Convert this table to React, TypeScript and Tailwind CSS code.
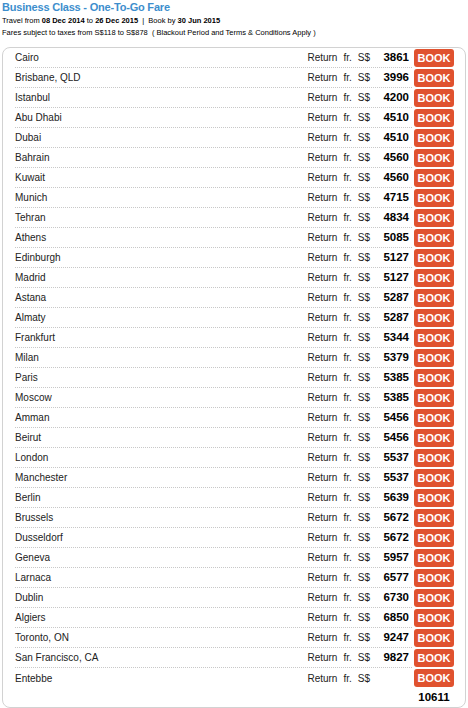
const fares: [string, string][] = [
  ['Cairo', '3861'],
  ['Brisbane, QLD', '3996'],
  ['Istanbul', '4200'],
  ['Abu Dhabi', '4510'],
  ['Dubai', '4510'],
  ['Bahrain', '4560'],
  ['Kuwait', '4560'],
  ['Munich', '4715'],
  ['Tehran', '4834'],
  ['Athens', '5085'],
  ['Edinburgh', '5127'],
  ['Madrid', '5127'],
  ['Astana', '5287'],
  ['Almaty', '5287'],
  ['Frankfurt', '5344'],
  ['Milan', '5379'],
  ['Paris', '5385'],
  ['Moscow', '5385'],
  ['Amman', '5456'],
  ['Beirut', '5456'],
  ['London', '5537'],
  ['Manchester', '5537'],
  ['Berlin', '5639'],
  ['Brussels', '5672'],
  ['Dusseldorf', '5672'],
  ['Geneva', '5957'],
  ['Larnaca', '6577'],
  ['Dublin', '6730'],
  ['Algiers', '6850'],
  ['Toronto, ON', '9247'],
  ['San Francisco, CA', '9827'],
  ['Entebbe', ''],
];

const FareRow = ({ city, price, last }: { city: string; price: string; last: boolean }) => (
  <div className="flex h-[20px] items-center">
    <div
      className={`flex h-full flex-1 items-center ${last ? '' : 'border-b border-dotted border-[#c8c8c8]'}`}
    >
      <span className="flex-1 text-[10px] text-[#222]">{city}</span>
      <span className="mr-[2px] flex gap-[6px] text-[10px] text-[#222]">
        <span>Return</span>
        <span>fr.</span>
        <span>S$</span>
      </span>
      <span className="w-[40px] pr-[3px] text-right text-[11.5px] font-bold text-black">{price}</span>
    </div>
    <button
      type="button"
      className="ml-[2px] flex h-[18px] w-[40px] items-center justify-center rounded-[3px] bg-[#e0522f] text-[11px] font-bold text-white"
    >
      BOOK
    </button>
  </div>
);

const App = () => {
  return (
    <div className="h-[708px] w-[468px] bg-white font-['Liberation_Sans',Arial,sans-serif]">
      <div className="px-[2px]">
        <h1 className="text-[11px] font-bold leading-[15px] tracking-[-0.2px] text-[#3d8ecd]">
          Business Class - One-To-Go Fare
        </h1>
        <p className="text-[7.5px] leading-[12px] text-black">
          Travel from <b>08 Dec 2014</b> to <b>26 Dec 2015</b> &nbsp;|&nbsp; Book by <b>30 Jun 2015</b>
        </p>
        <p className="text-[7.5px] leading-[12px] text-black">
          Fares subject to taxes from S$118 to S$878 &nbsp;( Blackout Period and Terms &amp; Conditions Apply )
        </p>
      </div>

      <div className="mx-[2px] mt-[8px] w-[464px] rounded-[8px] border border-[#d2d2d2] pr-[11px] pl-[12px]">
        {fares.map(([city, price], i) => (
          <FareRow
            key={city}
            city={city}
            price={price}
            last={i === fares.length - 1}
          />
        ))}
        <div className="flex h-[19px] items-center justify-end">
          <span className="w-[40px] text-center text-[11.5px] font-bold text-black">10611</span>
        </div>
      </div>
    </div>
  );
};

export default App;
